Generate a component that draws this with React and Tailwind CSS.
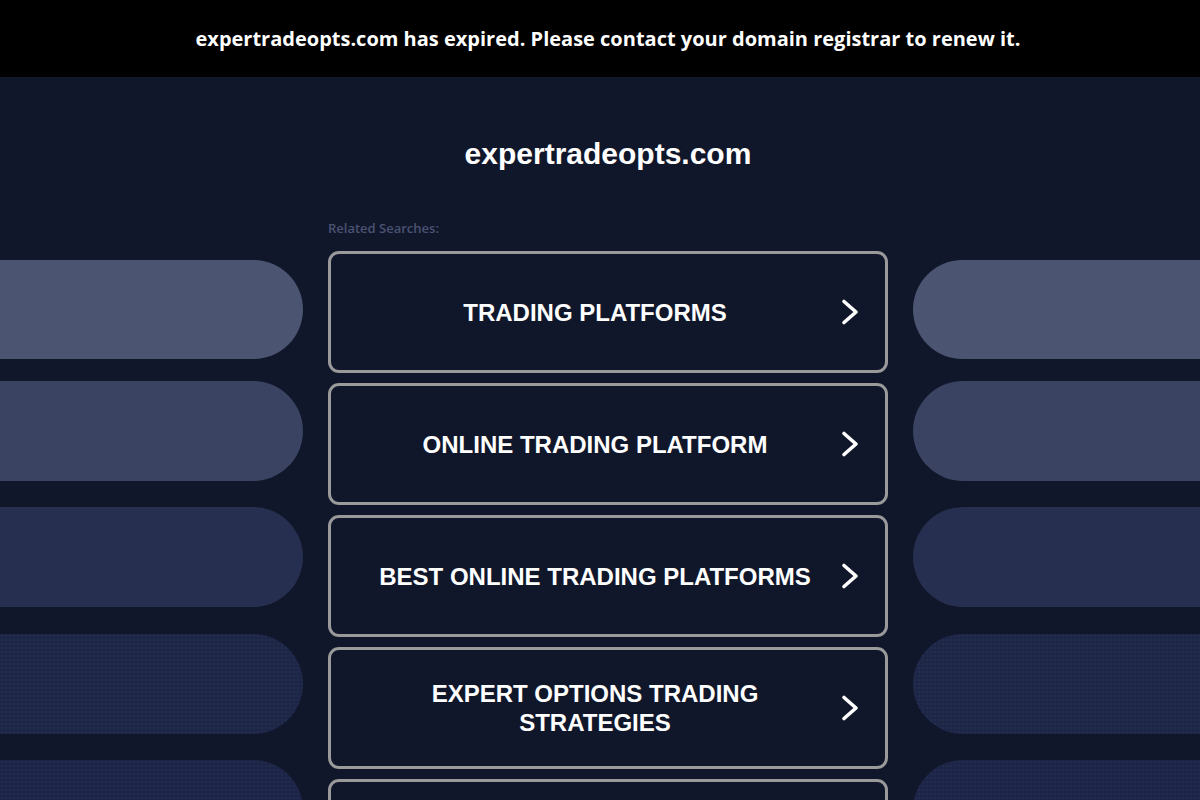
import React from "react";

const cards = [
  "TRADING PLATFORMS",
  "ONLINE TRADING PLATFORM",
  "BEST ONLINE TRADING PLATFORMS",
  "EXPERT OPTIONS TRADING STRATEGIES",
  "ONLINE TRADING COURSES",
];

function Chevron() {
  return (
    <svg width="20" height="28" viewBox="0 0 20 28" className="ml-[16px] shrink-0">
      <polyline
        points="4,3.5 16,14 4,24.5"
        fill="none"
        stroke="white"
        strokeWidth="3.6"
        strokeLinecap="round"
        strokeLinejoin="round"
      />
    </svg>
  );
}

const dots =
  "bg-[radial-gradient(rgba(255,255,255,0.03)_1px,transparent_1px)] bg-[length:4px_4px]";

function PillColumn({ side }) {
  const round = side === "left" ? "rounded-r-[50px]" : "rounded-l-[50px]";
  return (
    <div className="flex w-[303px] shrink-0 flex-col pt-[183px]">
      <div className={`h-[99px] ${round} bg-[#4b5572]`} />
      <div className={`mt-[22px] h-[100px] ${round} bg-[#3a4361]`} />
      <div className={`mt-[26px] h-[100px] ${round} bg-[#262f4f]`} />
      <div className={`mt-[27px] h-[100px] ${round} bg-[#1d2646] ${dots}`} />
      <div className={`mt-[26px] h-[100px] ${round} bg-[#1c2547] ${dots}`} />
    </div>
  );
}

export default function App() {
  return (
    <div className="h-[800px] w-full overflow-hidden bg-[#11172b]">
      <div className="w-[1216px]">
        <div className="flex h-[77px] items-center justify-center bg-black">
          <p className="font-['Open_Sans',sans-serif] text-[20px] font-bold text-white">
            expertradeopts.com has expired. Please contact your domain registrar to renew it.
          </p>
        </div>
        <div className="flex gap-[25px]">
          <PillColumn side="left" />
          <div className="flex w-[560px] shrink-0 flex-col">
            <h1 className="mt-[60px] text-center font-['Liberation_Sans',Arial,sans-serif] text-[30px] font-bold leading-[34px] text-white">
              expertradeopts.com
            </h1>
            <p className="mt-[49px] font-['Open_Sans',sans-serif] text-[13px] font-semibold leading-[16px] text-[#4a5271]">
              Related Searches:
            </p>
            <div className="mt-[15px] flex flex-col gap-[10px]">
              {cards.map((c) => (
                <div
                  key={c}
                  className="flex h-[122px] items-center rounded-[11px] border-[3px] border-[#9a9a9a] pl-[35px] pr-[25px]"
                >
                  <span className="flex-1 text-center font-['Liberation_Sans',Arial,sans-serif] text-[24px] font-bold leading-[29px] text-white">
                    {c}
                  </span>
                  <Chevron />
                </div>
              ))}
            </div>
          </div>
          <PillColumn side="right" />
        </div>
      </div>
    </div>
  );
}
